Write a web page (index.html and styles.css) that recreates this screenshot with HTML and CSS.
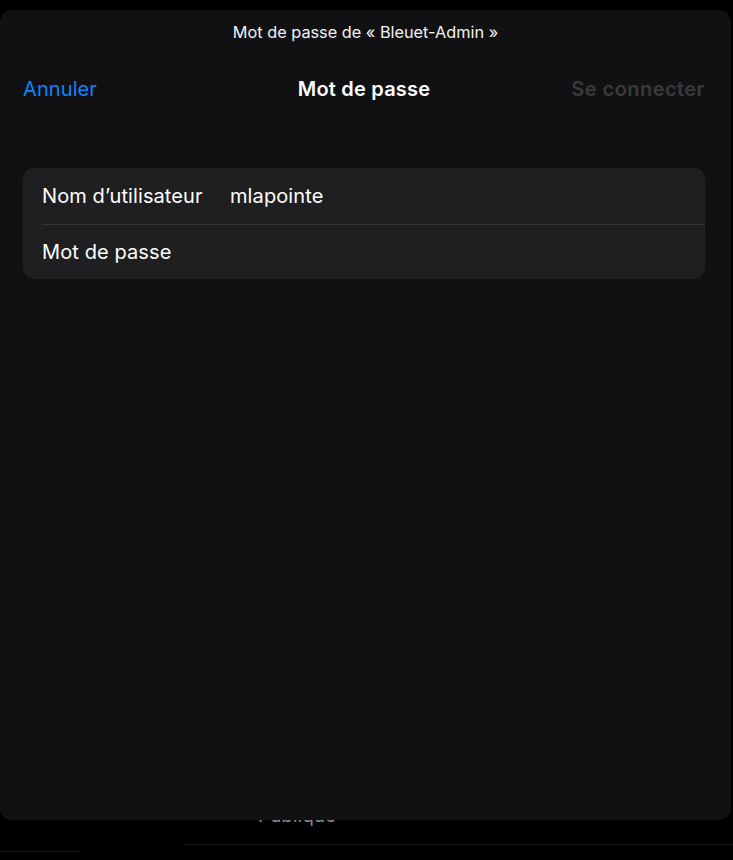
FILE: index.html
```html
<!DOCTYPE html>
<html lang="fr">
<head>
<meta charset="utf-8">
<title>Mot de passe</title>
<link rel="stylesheet" href="styles.css">
</head>
<body>
<div class="backdrop">
  <div class="bg-row">
    <span class="bg-label">Publique</span>
  </div>
  <div class="bg-lines">
    <div class="bg-line-left"></div>
    <div class="bg-line-right"></div>
  </div>
</div>

<div class="sheet">
  <div class="sheet-title">Mot de passe de « Bleuet-Admin »</div>
  <div class="nav">
    <span class="nav-btn cancel">Annuler</span>
    <span class="nav-title">Mot de passe</span>
    <span class="nav-btn connect">Se connecter</span>
  </div>
  <div class="card">
    <div class="row">
      <span class="label">Nom d’utilisateur</span>
      <span class="value">mlapointe</span>
    </div>
    <div class="row">
      <span class="label">Mot de passe</span>
    </div>
  </div>
</div>
</body>
</html>
```

FILE: styles.css
```css
* { box-sizing: border-box; }
html, body {
  margin: 0;
  padding: 0;
  background: #000;
  width: 733px;
  height: 860px;
  overflow: hidden;
  font-family: Inter, "Liberation Sans", sans-serif;
  color: #fff;
}

.backdrop {
  position: relative;
  width: 733px;
  height: 860px;
}
.bg-row {
  padding: 804px 0 0 258px;
  height: 830px;
}
.bg-label {
  font-size: 19px;
  color: #8e8e93;
}
.bg-lines {
  position: relative;
}
.bg-line-left {
  position: absolute;
  left: 0;
  top: 21px;
  width: 80px;
  height: 1px;
  background: #151515;
}
.bg-line-right {
  position: absolute;
  left: 183px;
  top: 14px;
  width: 550px;
  height: 1px;
  background: #151512;
}

.sheet {
  position: absolute;
  left: 0;
  top: 10px;
  width: 731px;
  height: 810px;
  background: #111113;
  border-radius: 12px;
  display: flex;
  flex-direction: column;
}

.sheet-title {
  text-align: center;
  font-size: 16.3px;
  line-height: 20px;
  margin-top: 12px;
  color: #f2f2f2;
}

.nav {
  display: grid;
  grid-template-columns: 1fr auto 1fr;
  align-items: center;
  padding: 0 26px 0 23px;
  margin-top: 35px;
  height: 24px;
  font-size: 20px;
}
.cancel { color: #0a84ff; justify-self: start; letter-spacing: 0.1px; }
.nav-title { font-weight: 600; color: #fff; letter-spacing: 0.2px; }
.connect { color: #3a3a3c; justify-self: end; font-weight: 600; letter-spacing: 0.45px; }

.card {
  margin: 67px 26px 0 23px;
  background: #1f1f21;
  border-radius: 11px;
  display: flex;
  flex-direction: column;
}
.row {
  display: flex;
  align-items: center;
  height: 55.5px;
  margin-left: 19px;
  font-size: 20px;
  letter-spacing: 0.1px;
}
.row + .row {
  border-top: 1px solid #353538;
}
.label {
  width: 188px;
  color: #fff;
}
.value {
  color: #fff;
}
```
